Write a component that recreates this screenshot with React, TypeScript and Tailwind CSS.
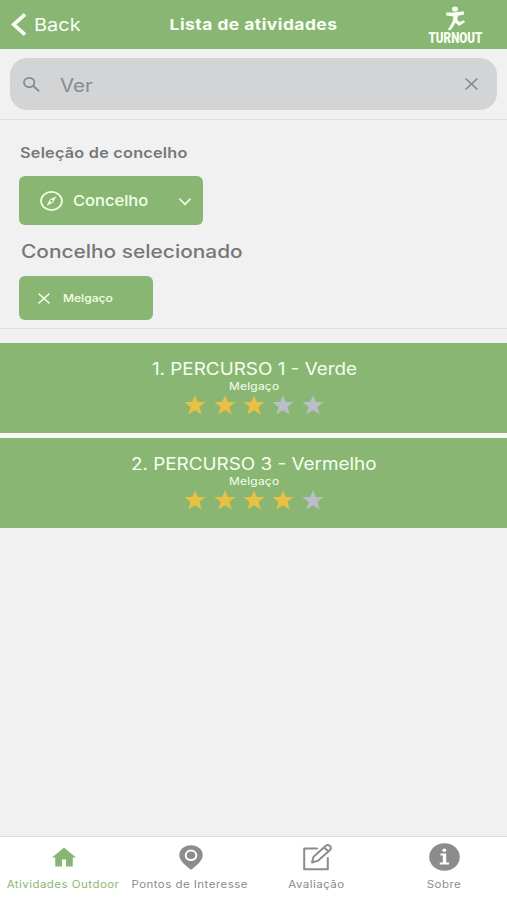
import type { ReactNode } from "react";

const CloseIcon = ({ className }: { className: string }) => (
  <svg className={className} viewBox="0 0 12 12" preserveAspectRatio="none" fill="none" stroke="currentColor" strokeWidth="1.6" strokeLinecap="round">
    <path d="M1 1l10 10M11 1L1 11" />
  </svg>
);

const Logo = () => (
  <div className="flex w-[54px] flex-col items-center pt-px text-[#f8fff0]">
    <svg className="h-[25px] w-[22px]" viewBox="0 0 22 25" fill="currentColor">
      <ellipse cx="11" cy="3" rx="3" ry="2.6" />
      <path d="M2.2 6.4L9 6.6L19.8 5.2L20.2 8.4L14.2 9.8L13.2 13.4L15.6 16L19.8 14.2L21 16L15.2 20L11.4 16.8L8 22.6L5.6 24.6L4 23.6L8.6 15.4L9.4 10.4L2.2 9.6Z" />
    </svg>
    <span className="mt-px flex h-[13px] scale-x-[0.83] scale-y-[1.06] items-center font-['Roboto','Liberation_Sans',sans-serif] text-[14px] leading-[13px] font-black whitespace-nowrap">TURNOUT</span>
  </div>
);

const Stars = ({ count }: { count: number }) => (
  <div className="mt-[2px] ml-px flex gap-[7.3px]">
    {[0, 1, 2, 3, 4].map((i) => (
      <svg key={i} className={i < count ? "h-[20px] w-[22px] text-[#e8c043]" : "h-[20px] w-[22px] text-[#b9bec8]"} viewBox="0 0 22 19" preserveAspectRatio="none" fill="currentColor">
        <path d="M11 .3L13.8 6.7H21.6L15.4 11.3L17.7 18.6L11 14.4L4.3 18.6L6.6 11.3L.4 6.7H8.2Z" />
      </svg>
    ))}
  </div>
);

const Activity = ({ title, place, stars }: { title: string; place: string; stars: number }) => (
  <article className="flex h-[90px] flex-col items-center bg-[#89b773] pt-[15px] text-[#f5fff0]">
    <h2 className="scale-x-[1.11] pl-px text-[17px] leading-[22px] whitespace-nowrap">{title}</h2>
    <p className="scale-x-[1.14] pl-px text-[10.5px] leading-[13px] tracking-[0.2px]">{place}</p>
    <Stars count={stars} />
  </article>
);

const Tab = ({ label, active, children }: { label: string; active?: boolean; children: ReactNode }) => (
  <div className={active ? "flex flex-1 flex-col items-center text-[#89b773]" : "flex flex-1 flex-col items-center text-[#8c8c8c]"}>
    <div className="flex h-[40px] items-center justify-center pl-px">{children}</div>
    <span className="scale-x-[1.15] text-[10px] leading-[14px] tracking-[0.4px] whitespace-nowrap">{label}</span>
  </div>
);

export default function App() {
  return (
    <div className="flex h-[900px] w-[507px] flex-col overflow-hidden bg-[#f1f1f1] font-['Inter','Liberation_Sans',sans-serif]">
      <header className="grid h-[49px] shrink-0 grid-cols-[130px_1fr_130px] items-center bg-[#89b773] text-[#f8fff5]">
        <div className="flex items-center pl-[11px]">
          <svg className="h-[23px] w-[15px]" viewBox="0 0 15 23" fill="none" stroke="currentColor" strokeWidth="3.6">
            <path d="M14 1.4L2.7 11.5L14 21.6" />
          </svg>
          <span className="ml-[8px] origin-left scale-x-[1.14] pt-[2px] text-[17.5px]">Back</span>
        </div>
        <h1 className="scale-x-[1.16] pt-[2px] text-center text-[15px] font-bold tracking-[0.4px] whitespace-nowrap">Lista de atividades</h1>
        <div className="flex justify-end pr-[25px]"><Logo /></div>
      </header>

      <section className="h-[71px] shrink-0 border-b border-[#dedede] px-[10px] pt-[9px]">
        <div className="flex h-[52px] items-center rounded-[17px] bg-[#d2d4d6] pr-[19px] pl-[13px] text-[#858b92]">
          <svg className="h-[15px] w-[17px]" viewBox="0 0 17 15" preserveAspectRatio="none" fill="none" stroke="currentColor" strokeWidth="1.8">
            <ellipse cx="6.2" cy="5.5" rx="5.2" ry="4.6" />
            <path d="M10 8.8L16.2 14.2" />
          </svg>
          <span className="ml-[20px] origin-left scale-x-[1.14] pt-[2px] text-[18px]">Ver</span>
          <CloseIcon className="ml-auto h-[12px] w-[13px]" />
        </div>
      </section>

      <section className="h-[209px] shrink-0 border-b border-[#dedede] pl-[19px] text-[#777]">
        <h2 className="ml-px w-fit origin-left scale-x-[1.16] pt-[23px] text-[14px] leading-[20px] font-semibold tracking-[0.2px]">Seleção de concelho</h2>
        <button className="mt-[13px] flex h-[49px] w-[184px] items-center rounded-[6px] bg-[#89b773] pr-[12px] pl-[21px] text-[#f2ffe9]">
          <svg className="h-[20px] w-[23px]" viewBox="0 0 24 21" preserveAspectRatio="none" fill="none" stroke="currentColor" strokeWidth="1.8">
            <ellipse cx="12" cy="10.5" rx="10.9" ry="9.6" />
            <path fill="currentColor" stroke="none" fillRule="evenodd" d="M17 5.5L13.7 12.2L6.9 15.5L10.2 8.8ZM12 9.2A1.4 1.3 0 1 0 12 11.8A1.4 1.3 0 1 0 12 9.2Z" />
          </svg>
          <span className="ml-[10px] origin-left scale-x-[1.1] pt-px text-[15px] font-medium">Concelho</span>
          <svg className="mt-[2px] ml-auto h-[8px] w-[12px]" viewBox="0 0 12 8" fill="none" stroke="currentColor" strokeWidth="1.6" strokeLinecap="round" strokeLinejoin="round">
            <path d="M1 1.2L6 6.4L11 1.2" />
          </svg>
        </button>
        <h2 className="mt-[14px] ml-[2px] w-fit origin-left scale-x-[1.16] text-[18px] leading-[25px] font-medium">Concelho selecionado</h2>
        <button className="mt-[12px] flex h-[44px] w-[134px] items-center rounded-[6px] bg-[#89b773] pl-[19px] text-[#f2ffe9]">
          <CloseIcon className="h-[11px] w-[12px]" />
          <span className="ml-[13px] origin-left scale-x-[1.15] pt-[2px] text-[10.5px] font-medium">Melgaço</span>
        </button>
      </section>

      <main className="mt-[14px] grow">
        <div className="flex flex-col gap-[5px] bg-[#f7faf4]">
          <Activity title="1. PERCURSO 1 - Verde" place="Melgaço" stars={3} />
          <Activity title="2. PERCURSO 3 - Vermelho" place="Melgaço" stars={4} />
        </div>
      </main>

      <nav className="flex h-[64px] shrink-0 border-t border-[#dddddd] bg-white">
        <Tab label="Atividades Outdoor" active>
          <svg className="h-[20px] w-[24px]" viewBox="0 0 24 20" fill="currentColor">
            <path d="M12 .5L24 10.5H20.8V19.5H14V12.5H10V19.5H3.2V10.5H0L12 .5Z" />
          </svg>
        </Tab>
        <Tab label="Pontos de Interesse">
          <svg className="h-[25px] w-[24px]" viewBox="0 0 24 25">
            <path fill="currentColor" d="M12 .3C5.3.3.3 4.6.3 10.2C.3 15.5 6.5 20.5 12 24.7C17.5 20.5 23.7 15.5 23.7 10.2C23.7 4.6 18.7.3 12 .3Z" />
            <ellipse cx="12" cy="10.3" rx="5.3" ry="4.8" fill="none" stroke="white" strokeWidth="2" />
          </svg>
        </Tab>
        <Tab label="Avaliação">
          <svg className="h-[27px] w-[29px]" viewBox="0 0 29 27" fill="none" stroke="currentColor" strokeWidth="2" strokeLinejoin="round" strokeLinecap="round">
            <path d="M14 4.4H1.2V25.2H24.8V14" />
            <path d="M9 18.5L10.6 12.8L22 2.4C23.6.9 25.7.8 27 2C28.3 3.2 28.2 5 26.8 6.3L15.2 16.6ZM21 3.6L25.6 7.3" />
          </svg>
        </Tab>
        <Tab label="Sobre">
          <svg className="h-[28px] w-[31px]" viewBox="0 0 31 28">
            <ellipse cx="15.5" cy="14" rx="15.3" ry="13.8" fill="currentColor" />
            <ellipse cx="15.3" cy="7.2" rx="2" ry="1.8" fill="white" />
            <path fill="white" d="M11.5 10.5H17.2V19.4H20V21.4H10.8V19.4H13.8V12.4H11.5Z" />
          </svg>
        </Tab>
      </nav>
    </div>
  );
}
